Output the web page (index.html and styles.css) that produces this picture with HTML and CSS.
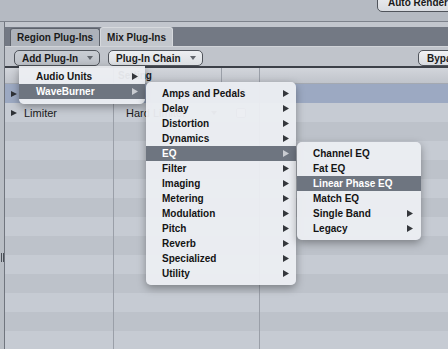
FILE: index.html
```html
<!DOCTYPE html>
<html lang="en">
<head>
    <meta charset="UTF-8">
    <meta name="viewport" content="width=device-width, initial-scale=1.0">
    <title>Mix Plug-Ins</title>
    <link rel="stylesheet" href="styles.css">
</head>
<body>
    <div class="window">
        <div class="topbar">
            <button class="btn auto">Auto Render</button>
        </div>

        <div class="main">
            <div class="gutter"><span class="grip"></span></div>
            <div class="content">
                <div class="tabband">
                    <div class="tab">Region Plug-Ins</div>
                    <div class="tab active">Mix Plug-Ins</div>
                </div>

                <div class="toolbar">
                    <button class="btn pressed">Add Plug-In <i class="caret"></i></button>
                    <button class="btn">Plug-In Chain <i class="caret"></i></button>
                    <button class="btn bypass">Bypass</button>
                </div>

                <div class="table">
                    <div class="thead">
                        <div class="cell"></div>
                        <div class="cell">Setting</div>
                        <div class="cell"></div>
                        <div class="cell"></div>
                    </div>
                    <div class="row selected">
                        <div class="cell"><i class="disclose"></i></div>
                        <div class="cell"><i class="caret small"></i></div>
                        <div class="cell"><span class="check"></span></div>
                        <div class="cell"></div>
                    </div>
                    <div class="row">
                        <div class="cell"><i class="disclose"></i>Limiter</div>
                        <div class="cell">Hard Limiter<i class="caret small"></i></div>
                        <div class="cell"><span class="check"></span></div>
                        <div class="cell"></div>
                    </div>
                    <div class="row"><div class="cell"></div><div class="cell"></div><div class="cell"></div><div class="cell"></div></div>
                    <div class="row"><div class="cell"></div><div class="cell"></div><div class="cell"></div><div class="cell"></div></div>
                    <div class="row"><div class="cell"></div><div class="cell"></div><div class="cell"></div><div class="cell"></div></div>
                    <div class="row"><div class="cell"></div><div class="cell"></div><div class="cell"></div><div class="cell"></div></div>
                    <div class="row"><div class="cell"></div><div class="cell"></div><div class="cell"></div><div class="cell"></div></div>
                    <div class="row"><div class="cell"></div><div class="cell"></div><div class="cell"></div><div class="cell"></div></div>
                    <div class="row"><div class="cell"></div><div class="cell"></div><div class="cell"></div><div class="cell"></div></div>
                    <div class="row"><div class="cell"></div><div class="cell"></div><div class="cell"></div><div class="cell"></div></div>
                    <div class="row"><div class="cell"></div><div class="cell"></div><div class="cell"></div><div class="cell"></div></div>
                    <div class="row"><div class="cell"></div><div class="cell"></div><div class="cell"></div><div class="cell"></div></div>
                    <div class="row"><div class="cell"></div><div class="cell"></div><div class="cell"></div><div class="cell"></div></div>
                    <div class="row"><div class="cell"></div><div class="cell"></div><div class="cell"></div><div class="cell"></div></div>
                </div>
            </div>
        </div>

        <!-- Add Plug-In menu -->
        <div class="menu menu-root">
            <div class="item">Audio Units <svg class="arrow" width="6" height="7"><polygon points="0,0 6,3.5 0,7"/></svg></div>
            <div class="item hi">WaveBurner <svg class="arrow" width="6" height="7"><polygon points="0,0 6,3.5 0,7"/></svg></div>
        </div>

        <!-- WaveBurner categories -->
        <div class="menu menu-cat">
            <div class="item">Amps and Pedals <svg class="arrow" width="6" height="7"><polygon points="0,0 6,3.5 0,7"/></svg></div>
            <div class="item">Delay <svg class="arrow" width="6" height="7"><polygon points="0,0 6,3.5 0,7"/></svg></div>
            <div class="item">Distortion <svg class="arrow" width="6" height="7"><polygon points="0,0 6,3.5 0,7"/></svg></div>
            <div class="item">Dynamics <svg class="arrow" width="6" height="7"><polygon points="0,0 6,3.5 0,7"/></svg></div>
            <div class="item hi">EQ <svg class="arrow" width="6" height="7"><polygon points="0,0 6,3.5 0,7"/></svg></div>
            <div class="item">Filter <svg class="arrow" width="6" height="7"><polygon points="0,0 6,3.5 0,7"/></svg></div>
            <div class="item">Imaging <svg class="arrow" width="6" height="7"><polygon points="0,0 6,3.5 0,7"/></svg></div>
            <div class="item">Metering <svg class="arrow" width="6" height="7"><polygon points="0,0 6,3.5 0,7"/></svg></div>
            <div class="item">Modulation <svg class="arrow" width="6" height="7"><polygon points="0,0 6,3.5 0,7"/></svg></div>
            <div class="item">Pitch <svg class="arrow" width="6" height="7"><polygon points="0,0 6,3.5 0,7"/></svg></div>
            <div class="item">Reverb <svg class="arrow" width="6" height="7"><polygon points="0,0 6,3.5 0,7"/></svg></div>
            <div class="item">Specialized <svg class="arrow" width="6" height="7"><polygon points="0,0 6,3.5 0,7"/></svg></div>
            <div class="item">Utility <svg class="arrow" width="6" height="7"><polygon points="0,0 6,3.5 0,7"/></svg></div>
        </div>

        <!-- EQ plug-ins -->
        <div class="menu menu-eq">
            <div class="item">Channel EQ</div>
            <div class="item">Fat EQ</div>
            <div class="item hi">Linear Phase EQ</div>
            <div class="item">Match EQ</div>
            <div class="item">Single Band <svg class="arrow" width="6" height="7"><polygon points="0,0 6,3.5 0,7"/></svg></div>
            <div class="item">Legacy <svg class="arrow" width="6" height="7"><polygon points="0,0 6,3.5 0,7"/></svg></div>
        </div>
    </div>
</body>
</html>
```

FILE: styles.css
```css
body {
    margin: 0;
    background-color: #c2c6cd;
    font-family: "Liberation Sans", Arial, sans-serif;
    color: #1a1a1a;
}
.window {
    position: relative;
    width: 448px;
    height: 349px;
    overflow: hidden;
}

/* top strip */
.topbar {
    height: 21px;
    background-color: #b5bac2;
    border-bottom: 1px solid #7d828b;
    display: flex;
    justify-content: flex-end;
    overflow: hidden;
}
.btn {
    box-sizing: border-box;
    height: 16px;
    padding: 0 6px 0 7px;
    font: bold 10px "Liberation Sans", Arial, sans-serif;
    color: #1a1a1a;
    background: linear-gradient(#f1f2f4, #d9dce1);
    border: 1px solid #50545b;
    border-radius: 5px;
    display: flex;
    align-items: center;
    white-space: nowrap;
}
.btn.pressed {
    background: linear-gradient(#c9cdd3, #bcc0c7);
}
.btn.auto {
    margin-top: -10px;
    height: 22px;
    width: 92px;
    margin-right: -21px;
    padding-left: 10px;
    padding-top: 2px;
}
.caret {
    width: 0;
    height: 0;
    margin-left: 9px;
    border-top: 4px solid #62666d;
    border-left: 3px solid transparent;
    border-right: 3px solid transparent;
}

.main {
    display: flex;
    height: 327px;
}
.gutter {
    width: 5px;
    background-color: #b9bec5;
    border-right: 1px solid #70757e;
    padding-top: 231px;
    box-sizing: border-box;
}
.grip {
    display: block;
    width: 1px;
    height: 9px;
    margin-left: 1px;
    border-left: 1px solid #4a4f57;
    border-right: 1px solid #4a4f57;
}
.content {
    flex: 1;
    display: flex;
    flex-direction: column;
    min-width: 0;
}

/* tabs */
.tabband {
    margin-top: 5px;
    height: 20px;
    background-color: #737984;
    display: flex;
    align-items: flex-end;
    padding-left: 5px;
}
.tab {
    box-sizing: border-box;
    height: 18px;
    padding: 0 6px;
    font-size: 10px;
    font-weight: bold;
    line-height: 18px;
    background-color: #adb2ba;
    border: 1px solid #5d626b;
    border-bottom: none;
    border-radius: 3px 3px 0 0;
}
.tab.active {
    height: 19px;
    line-height: 19px;
    background-color: #c3c7cd;
    border-color: #d6d9dd;
}

/* toolbar */
.toolbar {
    height: 23px;
    border-top: 1px solid #d0d3d8;
    background-color: #c0c4cb;
    display: flex;
    align-items: flex-start;
    padding: 3px 0 0 9px;
    gap: 8px;
    box-sizing: content-box;
}
.toolbar .btn:nth-child(2) {
    background: linear-gradient(#eceef1, #dcdfe3);
}
.btn.bypass {
    margin-left: auto;
    margin-right: -30px;
    width: 60px;
    padding-left: 8px;
}

/* table */
.table {
    border-top: 2px solid #3c4048;
}
.thead,
.row {
    display: grid;
    grid-template-columns: 109px 108px 38px 1fr;
}
.thead {
    height: 16px;
    box-sizing: border-box;
    background: linear-gradient(#d2d5db, #c0c4cb);
    border-bottom: 1px solid #a4a9b1;
    font-size: 10px;
    font-weight: bold;
    line-height: 15px;
}
.thead .cell {
    padding-left: 4px;
}
.cell {
    box-sizing: border-box;
    border-right: 1px solid #9a9fa8;
    display: flex;
    align-items: center;
    overflow: hidden;
    white-space: nowrap;
}
.cell:last-child {
    border-right: none;
}
.row .cell:nth-child(2) {
    border-right-color: transparent;
}
.row {
    height: 19px;
    font-size: 11px;
    background-color: #bdc2ca;
}
.row:nth-child(odd) {
    background-color: #c6cbd3;
}
.row.selected {
    background-color: #9ca9c2;
}
.row .cell:first-child {
    padding-left: 6px;
}
.row .cell:nth-child(2) {
    padding-left: 12px;
}
.row .cell:nth-child(3) {
    justify-content: center;
}
.disclose {
    width: 0;
    height: 0;
    margin-right: 7px;
    border-left: 6px solid #2e3136;
    border-top: 3.5px solid transparent;
    border-bottom: 3.5px solid transparent;
}
.caret.small {
    margin-left: auto;
    margin-right: 4px;
}
.check {
    box-sizing: border-box;
    width: 10px;
    height: 10px;
    border: 1px solid #8b9098;
    border-radius: 2px;
    background-color: #e6e8eb;
}

/* pop-up menus */
.menu {
    position: absolute;
    box-sizing: border-box;
    padding: 4px 0;
    background-color: rgba(236, 238, 242, 0.95);
    border-radius: 5px;
    box-shadow: 0 3px 8px rgba(0, 0, 0, 0.35);
    font-size: 10px;
    font-weight: bold;
    color: #141414;
}
.menu .item {
    height: 15px;
    display: flex;
    align-items: center;
    justify-content: space-between;
    padding: 0 7px 0 16px;
    white-space: nowrap;
}
.menu .item.hi {
    background-color: #6e7580;
    color: #ffffff;
}
.arrow polygon {
    fill: #34373c;
}
.item.hi .arrow polygon {
    fill: #c9ccd1;
}
.menu-root {
    left: 19px;
    top: 66px;
    width: 126px;
    padding: 3px 0 5px;
    border-radius: 0 0 5px 5px;
}
.menu-root .item {
    padding-left: 17px;
}
.menu-cat {
    left: 146px;
    top: 82px;
    width: 150px;
}
.menu-eq {
    left: 297px;
    top: 142px;
    width: 124px;
}
.menu-eq .item {
    padding-right: 8px;
}
```
